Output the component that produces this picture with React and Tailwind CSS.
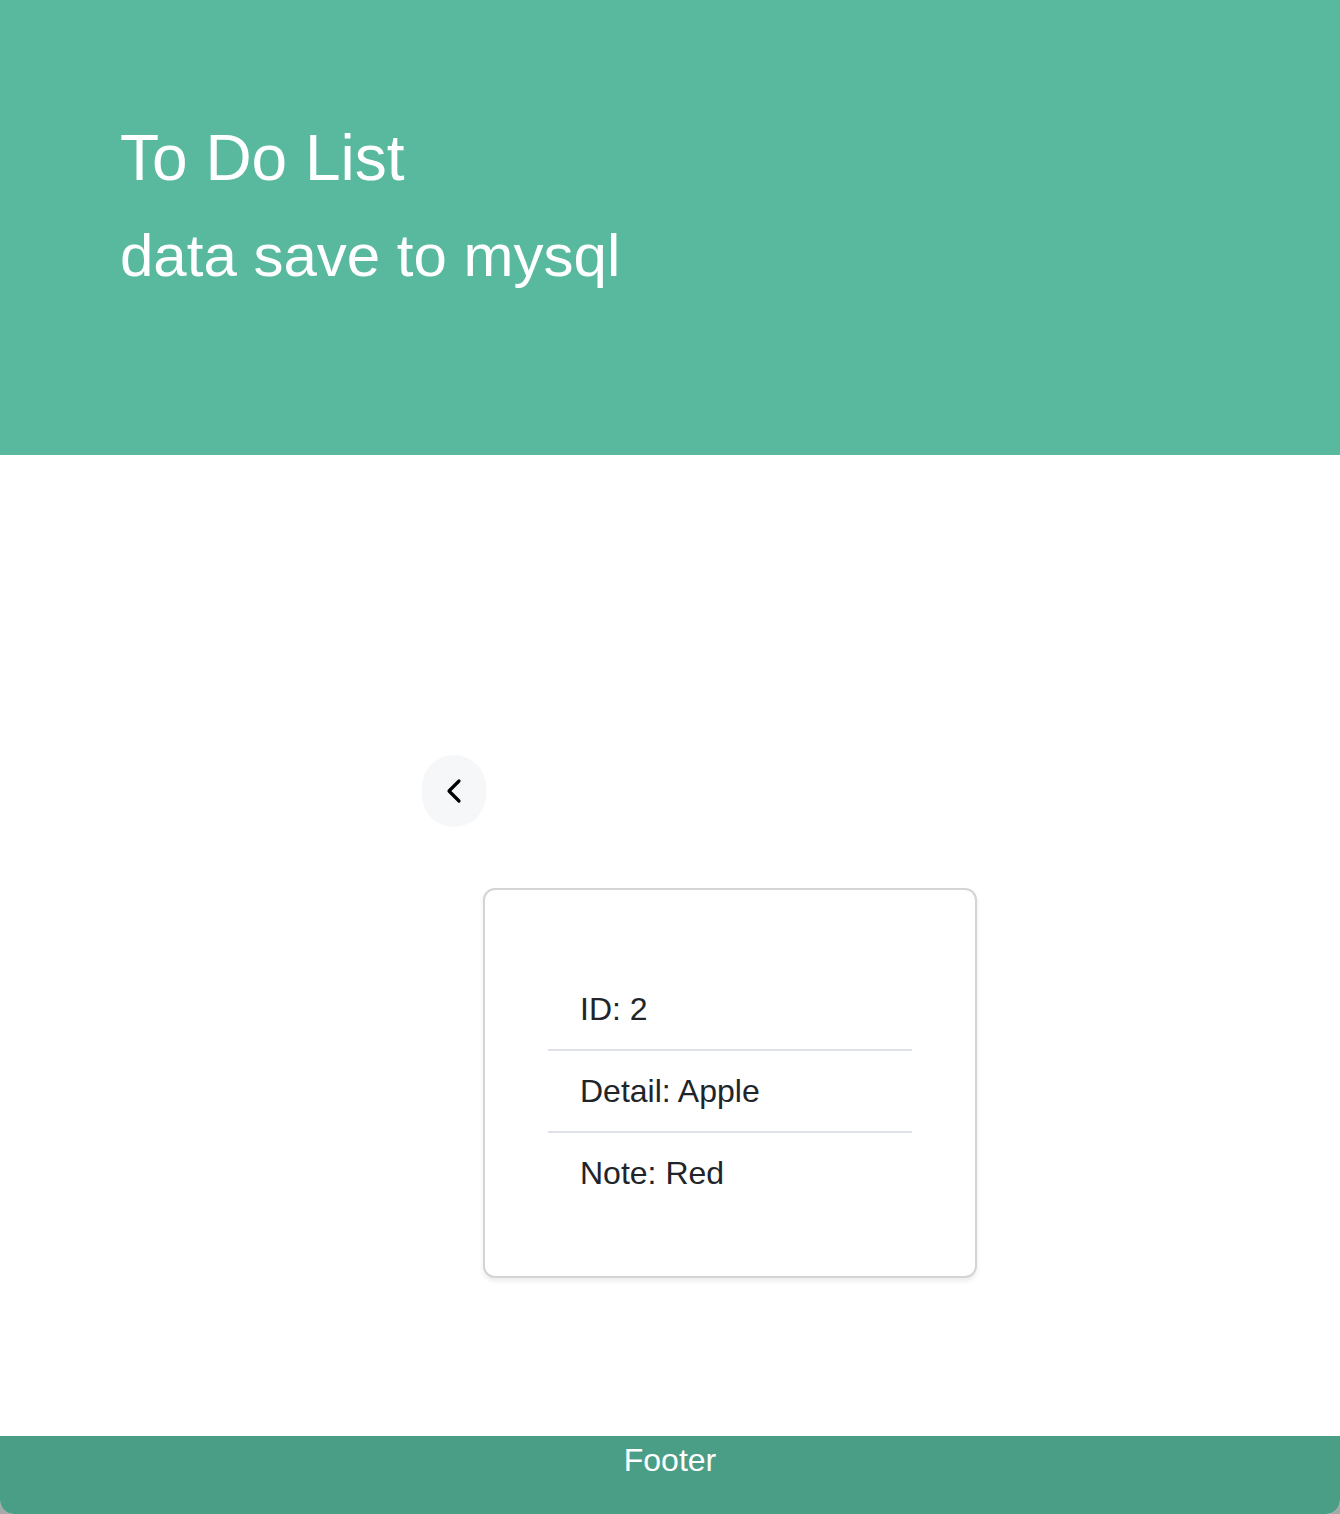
import React from 'react';

export default function App() {
  // item shown in the detail card
  const item = { id: 2, detail: 'Apple', note: 'Red' };

  return (
    <div className="bg-[#a8a8a8]" style={{ fontFamily: '"Liberation Sans", Arial, sans-serif' }}>
      <div className="min-h-[1514px] flex flex-col bg-white rounded-b-[14px] overflow-hidden">
        {/* Header */}
        <header className="h-[455px] bg-[#58b99e] px-[120px] pt-[126px] text-white">
          <h1 className="text-[64px] leading-none font-normal">To Do List</h1>
          <p className="mt-[36px] text-[60px] leading-none">data save to mysql</p>
        </header>

        {/* Content */}
        <main className="flex-1 pt-[300px] pb-[158px]">
          <div className="pl-[422px]">
            <button className="w-[64px] h-[72px] rounded-full bg-[#f6f7f9] flex items-center justify-center">
              <svg width="24" height="28" viewBox="0 0 24 28" fill="none">
                <path d="M17 4 L7 14 L17 24" stroke="#000" strokeWidth="3.2" strokeLinecap="round" strokeLinejoin="round" />
              </svg>
            </button>
          </div>

          <div className="ml-[483px] mt-[61px] w-[494px] h-[390px] border-2 border-[#d4d4d4] rounded-[12px] bg-white shadow-[0_3px_5px_rgba(0,0,0,0.08)] pt-[79px] px-[63px]">
            <ul className="text-[32px] leading-[48px] text-[#212529]">
              <li className="py-[16px] px-[32px] border-b-2 border-[#dee2e6]">ID: {item.id}</li>
              <li className="py-[16px] px-[32px] border-b-2 border-[#dee2e6]">Detail: {item.detail}</li>
              <li className="py-[16px] px-[32px]">Note: {item.note}</li>
            </ul>
          </div>
        </main>

        {/* Footer */}
        <footer className="h-[78px] bg-[#4a9e86] text-white text-center text-[32px] leading-[48px]">
          Footer
        </footer>
      </div>
    </div>
  );
}
